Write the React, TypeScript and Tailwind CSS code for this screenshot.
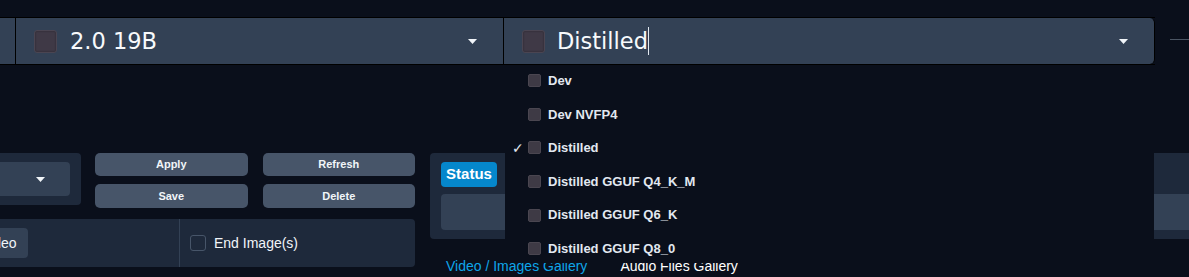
const models = ['Dev', 'Dev NVFP4', 'Distilled', 'Distilled GGUF Q4_K_M', 'Distilled GGUF Q6_K', 'Distilled GGUF Q8_0'];

function Caret({ className = '' }: { className?: string }) {
    return (
        <svg width="9" height="5" viewBox="0 0 9 5" className={className}>
            <path d="M0 0h9L4.5 5z" fill="#f1f5f9" />
        </svg>
    );
}

function Box({ size = 'lg' }: { size?: 'lg' | 'sm' }) {
    return size === 'lg' ? (
        <div className="w-[23px] h-[23px] shrink-0 rounded-[3px] bg-[#3f3946] border border-[#4a4552] shadow-[inset_0_0_2px_rgba(0,0,0,0.4)]" />
    ) : (
        <div className="w-[13px] h-[13px] shrink-0 rounded-[2px] bg-[#3e3a45] border border-[#4a4650]" />
    );
}

export default function App() {
    return (
        <div className="relative w-[1189px] h-[277px] overflow-hidden bg-[#0a0f1b] font-['Liberation_Sans',sans-serif] text-[#e5e7eb]">
            {/* model selectors */}
            <div className="flex pt-[17px]">
                <div className="flex h-[48px] w-[1155px] shrink-0 border-y border-black font-['DejaVu_Sans',sans-serif] text-[22.5px] text-[#f8fafc]">
                    <div className="w-[16px] bg-[#334155] border-r border-black" />
                    <div className="flex items-center w-[488px] bg-[#334155] border-r border-black pl-[18px] pr-[26px]">
                        <Box />
                        <span className="ml-[13px] leading-none">2.0 19B</span>
                        <Caret className="ml-auto" />
                    </div>
                    <div className="flex items-center flex-1 bg-[#334155] border-r border-black rounded-r-[5px] pl-[18px] pr-[26px]">
                        <Box />
                        <span className="ml-[12px] leading-none">Distilled</span>
                        <div className="w-px h-[28px] bg-[#e2e8f0]" />
                        <Caret className="ml-auto" />
                    </div>
                </div>
                <div className="ml-[15px] mt-[22px] h-px flex-1 bg-[#4b5563]" />
            </div>

            {/* lower area */}
            <div className="flex mt-[88px]">
                <div className="w-[415px] shrink-0 flex flex-col gap-[11px]">
                    <div className="flex">
                        <div className="w-[81px] h-[52px] bg-[#1e293b] rounded-r-[4px] pt-[9px]">
                            <div className="w-[70px] h-[34px] bg-[#334155] rounded-r-[4px] flex items-center pl-[36px]">
                                <Caret />
                            </div>
                        </div>
                        <div className="ml-[14px] grid grid-cols-2 gap-x-[15px] gap-y-[8px] flex-1 text-[11px] font-bold text-[#f1f5f9]">
                            <button className="h-[23px] bg-[#475569] rounded-[5px]">Apply</button>
                            <button className="h-[23px] bg-[#475569] rounded-[5px]">Refresh</button>
                            <button className="h-[24px] bg-[#475569] rounded-[5px]">Save</button>
                            <button className="h-[24px] bg-[#475569] rounded-[5px]">Delete</button>
                        </div>
                    </div>
                    <div className="flex h-[48px] bg-[#1e293b] rounded-r-[4px] text-[14px]">
                        <div className="w-[179px] flex items-center overflow-hidden">
                            <div className="-ml-[30px] h-[30px] px-[11px] flex items-center bg-[#334155] rounded-[4px] text-[#f1f5f9]">Video</div>
                        </div>
                        <div className="flex-1 flex items-center border-l border-[#334155] pl-[10px]">
                            <div className="w-[16px] h-[16px] rounded-[3px] border border-[#475569]" />
                            <span className="ml-[8px] text-[#f1f5f9]">End Image(s)</span>
                        </div>
                    </div>
                </div>

                <div className="ml-[15px] w-[770px] shrink-0 flex flex-col">
                    <div className="h-[86px] bg-[#1e293b] rounded-[4px] pl-[11px] pt-[9px]">
                        <div className="w-[56px] h-[25px] rounded-[4px] bg-[#0587cc] flex items-center justify-center text-[15px] font-bold text-white">
                            Status
                        </div>
                        <div className="mt-[7px] h-[36px] bg-[#334155] rounded-l-[4px]" />
                    </div>
                    <div className="flex mt-[20px] pl-[16px] text-[14px] leading-none">
                        <span className="text-[#0ea5e9]">Video / Images Gallery</span>
                        <span className="ml-[33px] text-white">Audio Files Gallery</span>
                    </div>
                </div>
            </div>

            {/* open dropdown menu */}
            <div className="absolute left-[505px] top-[65px] w-[649px] h-[198px] bg-[#0a0f1b]">
                <div className="-mt-[1px] flex flex-col">
                    {models.map((m) => (
                        <div key={m} className="h-[33.6px] flex items-center text-[13px] font-bold text-[#e2e8f0]">
                            <div className="w-[23px] pl-[7px] font-['DejaVu_Sans',sans-serif] font-normal text-[14px] leading-none text-[#e2e8f0]">
                                {m === 'Distilled' ? '✓' : ''}
                            </div>
                            <Box size="sm" />
                            <span className="ml-[7px]">{m}</span>
                        </div>
                    ))}
                </div>
            </div>
        </div>
    );
}
